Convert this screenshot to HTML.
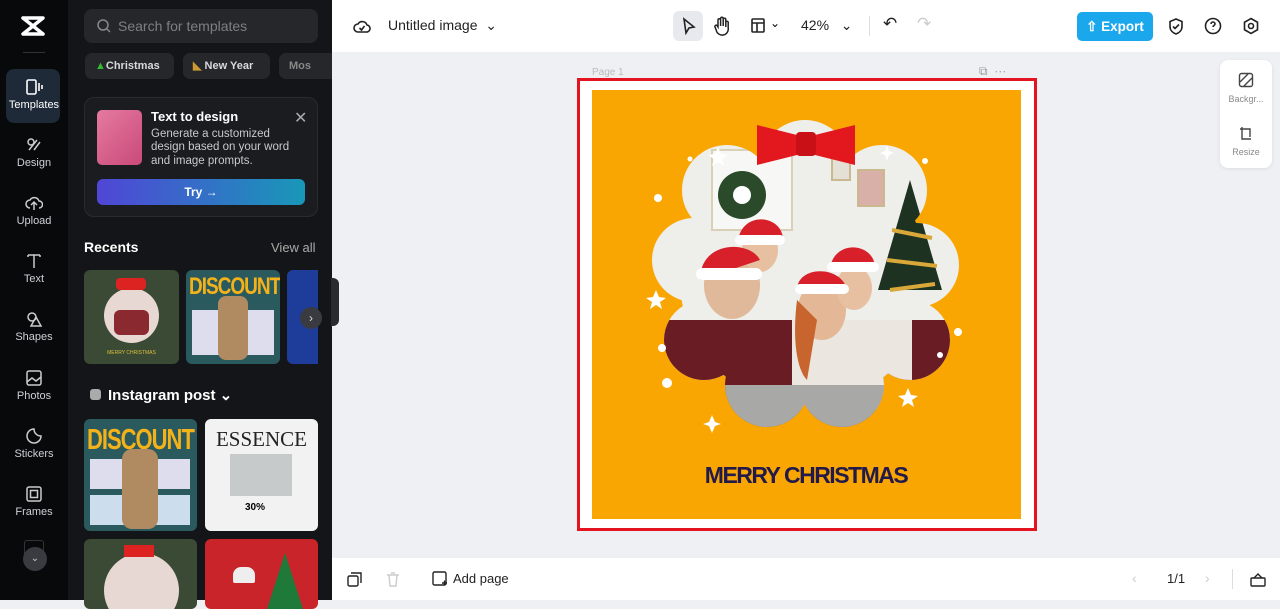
<!DOCTYPE html>
<html><head><meta charset="utf-8"><style>
*{box-sizing:border-box;margin:0;padding:0}
body{width:1280px;height:600px;overflow:hidden;font-family:"Liberation Sans",sans-serif;background:#eef0f3;position:relative}
.abs{position:absolute}
#rail{left:0;top:0;width:68px;height:600px;background:#08090b}
#panel{left:68px;top:0;width:264px;height:600px;background:#141518}
.ri{position:absolute;left:0;width:68px;text-align:center;color:#cfd0d4;font-size:11px}
.ri svg{display:block;margin:0 auto 3px}
.chip{position:absolute;top:53px;height:26px;border-radius:7px;background:#26272b;color:#d8d9dc;font-size:11px;line-height:26px;padding:0 10px;font-weight:bold}
.thumb{position:absolute;border-radius:6px;overflow:hidden}
#top{left:332px;top:0;width:948px;height:52px;background:#fff}
#bot{left:332px;top:558px;width:948px;height:42px;background:#fff}
</style></head><body>
<div id="rail" class="abs">
 <svg class="abs" style="left:19px;top:14px" width="28" height="24" viewBox="0 0 28 24"><path d="M4 4h20L4 20h20M4 4l20 16" stroke="#fff" stroke-width="3.5" fill="none" stroke-linejoin="round" stroke-linecap="round"/></svg>
 <div class="abs" style="left:23px;top:52px;width:22px;height:1px;background:#333"></div>
 <div class="abs" style="left:6px;top:69px;width:54px;height:54px;border-radius:8px;background:#1e2a38"></div>
 <div class="ri" style="top:78px;color:#fff"><svg width="18" height="18" viewBox="0 0 18 18" fill="none" stroke="#fff" stroke-width="1.6"><rect x="2" y="2" width="9" height="14" rx="1.5"/><path d="M14 5v8M17 7v4"/></svg>Templates</div>
 <div class="ri" style="top:136px"><svg width="18" height="18" viewBox="0 0 18 18" fill="none" stroke="#ccc" stroke-width="1.5"><circle cx="6" cy="6" r="3"/><path d="M9 14l6-8M4 14l8-10"/></svg>Design</div>
 <div class="ri" style="top:194px"><svg width="18" height="18" viewBox="0 0 18 18" fill="none" stroke="#ccc" stroke-width="1.5"><path d="M5 14a4 4 0 010-8 5 5 0 019 1 3.5 3.5 0 010 7M9 16V9M6 11l3-3 3 3"/></svg>Upload</div>
 <div class="ri" style="top:252px"><svg width="18" height="18" viewBox="0 0 18 18" fill="none" stroke="#ccc" stroke-width="1.5"><path d="M3 3h12M9 3v13M3 3v2M15 3v2"/></svg>Text</div>
 <div class="ri" style="top:310px"><svg width="18" height="18" viewBox="0 0 18 18" fill="none" stroke="#ccc" stroke-width="1.5"><circle cx="7" cy="7" r="4"/><path d="M11 7l5 9H6z"/></svg>Shapes</div>
 <div class="ri" style="top:369px"><svg width="18" height="18" viewBox="0 0 18 18" fill="none" stroke="#ccc" stroke-width="1.5"><rect x="2" y="2" width="14" height="14" rx="2"/><path d="M2 13l5-4 4 3 5-4"/></svg>Photos</div>
 <div class="ri" style="top:427px"><svg width="18" height="18" viewBox="0 0 18 18" fill="none" stroke="#ccc" stroke-width="1.5"><path d="M16 9a7 7 0 11-7-7c0 4 3 7 7 7z"/></svg>Stickers</div>
 <div class="ri" style="top:485px"><svg width="18" height="18" viewBox="0 0 18 18" fill="none" stroke="#ccc" stroke-width="1.5"><rect x="2" y="2" width="14" height="14" rx="2"/><rect x="5.5" y="5.5" width="7" height="7"/></svg>Frames</div>
 <div class="abs" style="left:24px;top:540px;width:20px;height:20px;border:1.5px solid #333;border-radius:3px"></div>
 <div class="abs" style="left:23px;top:547px;width:24px;height:24px;border-radius:50%;background:#3a3b40;color:#ccc;font-size:10px;text-align:center;line-height:24px">⌄</div>
</div>
<div id="panel" class="abs">
 <div class="abs" style="left:16px;top:9px;width:234px;height:34px;border-radius:8px;background:#26272b;color:#7d7f85;font-size:14px;line-height:34px;padding-left:34px">Search for templates</div>
 <svg class="abs" style="left:28px;top:18px" width="16" height="16" viewBox="0 0 16 16" fill="none" stroke="#888" stroke-width="1.5"><circle cx="7" cy="7" r="5"/><path d="M11 11l3 3"/></svg>
 <div class="chip" style="left:17px;width:89px"><span style="color:#3b3">▲</span>Christmas</div>
 <div class="chip" style="left:115px;width:87px"><span style="color:#c93">◣</span> New Year</div>
 <div class="chip" style="left:211px;width:53px;border-radius:7px 0 0 7px;color:#888">Mos</div>
 <div class="abs" style="left:16px;top:97px;width:234px;height:120px;border-radius:10px;background:#1b1c20;border:1px solid #2a2b30"></div>
 <div class="abs" style="left:29px;top:110px;width:45px;height:55px;border-radius:5px;background:linear-gradient(135deg,#e57aa0,#c94a78)"></div>
 <div class="abs" style="left:83px;top:109px;color:#fff;font-weight:bold;font-size:13px">Text to design</div>
 <div class="abs" style="left:83px;top:128px;color:#c8c9cd;font-size:11.5px;line-height:13.3px;width:150px">Generate a customized design based on your word and image prompts.</div>
 <div class="abs" style="left:226px;top:108px;color:#aaa;font-size:16px">✕</div>
 <div class="abs" style="left:29px;top:179px;width:208px;height:26px;border-radius:6px;background:linear-gradient(90deg,#5046d6,#1898b8);color:#fff;font-weight:bold;font-size:12px;text-align:center;line-height:26px">Try →</div>
 <div class="abs" style="left:16px;top:239px;color:#fff;font-weight:bold;font-size:14px">Recents</div>
 <div class="abs" style="left:203px;top:240px;color:#aaa;font-size:13px">View all</div>
 <div class="thumb" style="left:16px;top:270px;width:95px;height:94px;background:#3a4a34"><div class="abs" style="left:20px;top:18px;width:55px;height:55px;border-radius:50%;background:#e8d8d4"></div><div class="abs" style="left:32px;top:8px;width:30px;height:12px;background:#d22;border-radius:4px"></div><div class="abs" style="left:30px;top:40px;width:35px;height:25px;background:#8a2a30;border-radius:6px"></div><div class="abs" style="left:0;top:80px;width:95px;text-align:center;font-size:5px;color:#d9c040">MERRY CHRISTMAS</div></div>
 <div class="thumb" style="left:118px;top:270px;width:94px;height:94px;background:#2a5a5e"><div style="color:#f3b21a;font-weight:bold;font-size:19px;padding:3px 3px;letter-spacing:-1px;transform:scaleY(1.25);transform-origin:top">DISCOUNT</div><div class="abs" style="left:6px;top:40px;width:82px;height:45px;background:#dde"></div><div class="abs" style="left:32px;top:26px;width:30px;height:64px;background:#b08a60;border-radius:8px"></div></div>
 <div class="thumb" style="left:219px;top:270px;width:31px;height:94px;background:#1e3c9a;border-radius:6px 0 0 6px"></div>
 <div class="abs" style="left:232px;top:307px;width:22px;height:22px;border-radius:50%;background:#3a3b40;color:#ddd;font-size:12px;text-align:center;line-height:22px">›</div>
 <div class="abs" style="left:263px;top:278px;width:8px;height:48px;border-radius:0 6px 6px 0;background:#2a2b30"></div>
 <div class="abs" style="left:22px;top:389px;width:11px;height:11px;border-radius:3px;background:#aaa"></div>
 <div class="abs" style="left:40px;top:386px;color:#fff;font-weight:bold;font-size:15px">Instagram post ⌄</div>
 <div class="thumb" style="left:16px;top:419px;width:113px;height:112px;background:#2a5a5e"><div style="color:#f3b21a;font-weight:bold;font-size:22px;padding:3px 3px;letter-spacing:-1px;transform:scaleY(1.3);transform-origin:top">DISCOUNT</div><div class="abs" style="left:6px;top:40px;width:100px;height:30px;background:#dde"></div><div class="abs" style="left:6px;top:76px;width:100px;height:30px;background:#cde"></div><div class="abs" style="left:38px;top:30px;width:36px;height:80px;background:#b08a60;border-radius:10px"></div></div>
 <div class="thumb" style="left:137px;top:419px;width:113px;height:112px;background:#f2f2f2"><div style="font-family:'Liberation Serif',serif;font-size:21px;text-align:center;padding-top:8px;color:#222">ESSENCE</div><div class="abs" style="left:25px;top:35px;width:62px;height:42px;background:#c6cacb"></div><div class="abs" style="left:40px;top:83px;width:32px;height:12px;font-size:10px;font-weight:bold">30%</div></div>
 <div class="thumb" style="left:16px;top:539px;width:113px;height:70px;background:#3a4a34"><div class="abs" style="left:20px;top:14px;width:75px;height:75px;border-radius:50%;background:#e8d8d4"></div><div class="abs" style="left:40px;top:6px;width:30px;height:12px;background:#d22"></div></div>
 <div class="thumb" style="left:137px;top:539px;width:113px;height:70px;background:#c8242a"><div class="abs" style="left:62px;top:14px;width:0;height:0;border-left:18px solid transparent;border-right:18px solid transparent;border-bottom:56px solid #1f7a3a"></div><div class="abs" style="left:28px;top:28px;width:22px;height:16px;background:#eee;border-radius:8px 8px 2px 2px"></div></div>
</div>
<div id="top" class="abs">
 <svg class="abs" style="left:21px;top:17px" width="18" height="18" viewBox="0 0 18 18" fill="none" stroke="#222" stroke-width="1.6"><path d="M5 15a4 4 0 010-8 5 5 0 019 1 3.5 3.5 0 01-1 7z"/><path d="M6.5 11l2 2 3-4"/></svg>
 <div class="abs" style="left:56px;top:17px;font-size:14px;color:#222">Untitled image &nbsp;⌄</div>
 <div class="abs" style="left:341px;top:11px;width:30px;height:30px;border-radius:6px;background:#e6e9ee"></div>
 <svg class="abs" style="left:349px;top:17px" width="16" height="18" viewBox="0 0 16 18" fill="none" stroke="#222" stroke-width="1.6"><path d="M3 2l10 8-5 1-3 5z"/></svg>
 <svg class="abs" style="left:381px;top:16px" width="18" height="20" viewBox="0 0 18 20" fill="none" stroke="#222" stroke-width="1.5"><path d="M5 11V4a1.3 1.3 0 012.6 0v6V2.5a1.3 1.3 0 012.6 0V10V3.5a1.3 1.3 0 012.6 0V11V6a1.3 1.3 0 012.4 0v6a6 6 0 01-12 2L2 11a1.3 1.3 0 012-1.5z"/></svg>
 <svg class="abs" style="left:418px;top:17px" width="16" height="17" viewBox="0 0 16 17" fill="none" stroke="#222" stroke-width="1.6"><rect x="2" y="2" width="12" height="13" rx="1"/><path d="M2 6h12M7 6v9"/></svg>
 <div class="abs" style="left:438px;top:16px;font-size:12px">⌄</div>
 <div class="abs" style="left:469px;top:17px;font-size:14px;color:#222">42% &nbsp;&nbsp;⌄</div>
 <div class="abs" style="left:537px;top:16px;width:1px;height:20px;background:#ddd"></div>
 <div class="abs" style="left:551px;top:14px;font-size:17px;color:#222">↶</div>
 <div class="abs" style="left:585px;top:14px;font-size:17px;color:#ccc">↷</div>
 <div class="abs" style="left:745px;top:12px;width:76px;height:29px;border-radius:5px;background:#1aa7ec;color:#fff;font-weight:bold;font-size:13.5px;line-height:29px;text-align:center">⇧ Export</div>
 <svg class="abs" style="left:835px;top:17px" width="18" height="19" viewBox="0 0 18 19" fill="none" stroke="#222" stroke-width="1.6"><path d="M9 2l6 2.5v5c0 4-3 6.5-6 7.5-3-1-6-3.5-6-7.5v-5z"/><path d="M6 9.5l2 2 4-4"/></svg>
 <svg class="abs" style="left:872px;top:17px" width="18" height="18" viewBox="0 0 18 18" fill="none" stroke="#222" stroke-width="1.6"><circle cx="9" cy="9" r="7.5"/><path d="M7 7a2 2 0 114 0c0 1.5-2 1.5-2 3M9 12.5v.5"/></svg>
 <svg class="abs" style="left:910px;top:17px" width="18" height="18" viewBox="0 0 18 18" fill="none" stroke="#222" stroke-width="1.6"><path d="M9 1.5l6.5 3.75v7.5L9 16.5l-6.5-3.75v-7.5z"/><circle cx="9" cy="9" r="2.5"/></svg>
</div>
<div class="abs" style="left:592px;top:67px;font-size:10px;color:#bbb">Page 1</div>
<div class="abs" style="left:979px;top:64px;font-size:12px;color:#999">⧉ &nbsp;⋯</div>
<div class="abs" style="left:1220px;top:60px;width:52px;height:108px;border-radius:8px;background:#fff;box-shadow:0 1px 4px rgba(0,0,0,.08)"></div>
<svg class="abs" style="left:1238px;top:72px" width="16" height="16" viewBox="0 0 16 16" fill="none" stroke="#444" stroke-width="1.4"><rect x="1.5" y="1.5" width="13" height="13" rx="2"/><path d="M2 10l8-8M6 14l8-8"/></svg>
<div class="abs" style="left:1220px;top:94px;width:52px;text-align:center;font-size:9px;color:#888">Backgr...</div>
<svg class="abs" style="left:1238px;top:125px" width="16" height="16" viewBox="0 0 16 16" fill="none" stroke="#444" stroke-width="1.4"><path d="M4 2v12h9M2 4h10v8"/></svg>
<div class="abs" style="left:1220px;top:147px;width:52px;text-align:center;font-size:9px;color:#888">Resize</div>
<div class="abs" style="left:577px;top:78px;width:460px;height:453px;border:3px solid #e3141f;background:#fff"></div>
<div class="abs" style="left:592px;top:90px;width:429px;height:429px;background:#f9a602"></div>
<svg class="abs" style="left:592px;top:90px" width="429" height="429" viewBox="0 0 429 429">
 <defs><clipPath id="b">
  <circle cx="213" cy="190" r="125"/>
  <circle cx="213" cy="75" r="45"/><circle cx="290" cy="100" r="45"/><circle cx="325" cy="175" r="42"/><circle cx="318" cy="250" r="40"/>
  <circle cx="250" cy="295" r="42"/><circle cx="175" cy="295" r="42"/><circle cx="112" cy="250" r="40"/><circle cx="102" cy="170" r="42"/><circle cx="135" cy="100" r="45"/>
 </clipPath></defs>
 <g clip-path="url(#b)">
  <rect width="429" height="429" fill="#eeeeea"/>
  <rect x="120" y="60" width="80" height="80" fill="#f7f7f5" stroke="#d9d0b8" stroke-width="2"/>
  <rect x="240" y="68" width="18" height="22" fill="#e5e0d5" stroke="#c9b890" stroke-width="2"/>
  <rect x="266" y="80" width="26" height="36" fill="#d9b0a8" stroke="#c9b890" stroke-width="2"/>
  <circle cx="150" cy="105" r="24" fill="#2b4a2a"/><circle cx="150" cy="105" r="9" fill="#fff"/>
  <path d="M318 90l32 110h-64z" fill="#1e3222"/><path d="M300 140l40 8M295 170l50 6M298 200l45-6" stroke="#d9a838" stroke-width="4"/>
  <rect x="60" y="230" width="300" height="110" fill="#6a1c24"/>
  <rect x="200" y="230" width="120" height="90" fill="#ece6e0"/>
  <ellipse cx="140" cy="195" rx="28" ry="34" fill="#e0b89a"/>
  <ellipse cx="168" cy="160" rx="18" ry="22" fill="#e6c0a0"/>
  <ellipse cx="230" cy="220" rx="24" ry="30" fill="#e4b896"/>
  <path d="M205 210c-5 40 0 70 10 80l10-60z" fill="#c8642e"/>
  <ellipse cx="262" cy="198" rx="18" ry="22" fill="#e6c0a0"/>
  <path d="M108 190c0-40 50-40 60-20l-60 20z" fill="#d8202a"/><rect x="104" y="178" width="66" height="12" rx="6" fill="#fff"/>
  <path d="M146 150c5-30 45-25 45 0z" fill="#d8202a"/><rect x="143" y="145" width="50" height="10" rx="5" fill="#fff"/>
  <path d="M205 200c0-25 45-25 50 0z" fill="#d8202a"/><rect x="203" y="194" width="54" height="10" rx="5" fill="#fff"/>
  <path d="M238 178c5-30 45-25 45 0z" fill="#d8202a"/><rect x="235" y="172" width="52" height="10" rx="5" fill="#fff"/>
  <rect x="60" y="295" width="300" height="60" fill="#a8a8a6"/>
 </g>
 <path d="M165 35l40 10 0 20-40 10z M263 35l-40 10 0 20 40 10z" fill="#e3181e"/>
 <rect x="204" y="42" width="20" height="24" rx="4" fill="#c81016"/>
 <g fill="#fff"><path d="M126 57l3 7 7 1-6 4 2 7-6-4-6 4 2-7-6-4 7-1z"/><path d="M64 200l3 7 7 1-6 4 2 7-6-4-6 4 2-7-6-4 7-1z"/><path d="M316 298l3 7 7 1-6 4 2 7-6-4-6 4 2-7-6-4 7-1z"/><path d="M120 325l3 7 6 2-6 2-3 7-3-7-6-2 6-2z"/><path d="M295 55l2 6 5 2-5 2-2 6-2-6-5-2 5-2z"/>
 <circle cx="98" cy="69" r="2.5"/><circle cx="333" cy="71" r="3"/><circle cx="70" cy="258" r="4"/><circle cx="366" cy="242" r="4"/><circle cx="75" cy="293" r="5"/><circle cx="348" cy="265" r="3"/><circle cx="66" cy="108" r="4"/></g>
 <text x="214" y="393" text-anchor="middle" font-family="Liberation Sans" font-weight="bold" font-size="23" fill="#231a4a" letter-spacing="-1.5">MERRY CHRISTMAS</text>
</svg>
<div id="bot" class="abs">
 <svg class="abs" style="left:15px;top:14px" width="15" height="15" viewBox="0 0 15 15" fill="none" stroke="#222" stroke-width="1.4"><rect x="1" y="4" width="10" height="10" rx="1.5"/><path d="M4 1h10v10"/></svg>
 <svg class="abs" style="left:54px;top:14px" width="14" height="15" viewBox="0 0 14 15" fill="none" stroke="#ccc" stroke-width="1.4"><path d="M1 3h12M3 3l1 11h6l1-11M5 1h4"/></svg>
 <svg class="abs" style="left:100px;top:13px" width="16" height="16" viewBox="0 0 16 16" fill="none" stroke="#222" stroke-width="1.4"><rect x="1" y="1" width="13" height="13" rx="1.5"/><path d="M10 12h5M12.5 9.5v5"/></svg>
 <div class="abs" style="left:121px;top:13px;font-size:13px;color:#222">Add page</div>
 <div class="abs" style="left:800px;top:12px;font-size:14px;color:#ccc">‹</div>
 <div class="abs" style="left:835px;top:13px;font-size:13px;color:#222">1/1</div>
 <div class="abs" style="left:873px;top:12px;font-size:14px;color:#ccc">›</div>
 <div class="abs" style="left:900px;top:11px;width:1px;height:20px;background:#ddd"></div>
 <svg class="abs" style="left:918px;top:14px" width="16" height="15" viewBox="0 0 16 15" fill="none" stroke="#222" stroke-width="1.4"><rect x="1" y="6" width="14" height="8" rx="1"/><path d="M4 6l4-4 4 4"/></svg>
</div>
</body></html>
